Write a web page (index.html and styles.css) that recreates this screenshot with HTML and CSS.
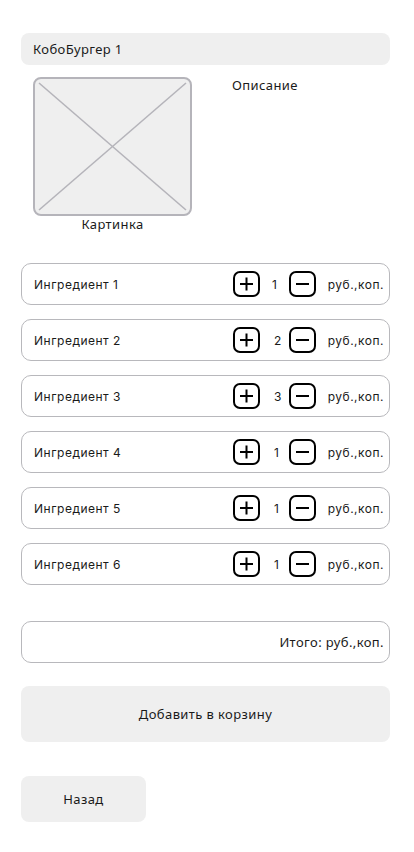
FILE: index.html
```html
<!DOCTYPE html>
<html lang="ru">
<head>
<meta charset="utf-8">
<link rel="stylesheet" href="styles.css">
</head>
<body>
<main class="page">
  <div class="title">КобоБургер 1</div>
  <section class="media">
    <figure class="pic">
      <div class="pic-box">
        <svg width="159" height="139" viewBox="0 0 159 139">
          <line x1="6" y1="6" x2="153" y2="133" stroke="#b5b4ba" stroke-width="1.6"/>
          <line x1="153" y1="6" x2="6" y2="133" stroke="#b5b4ba" stroke-width="1.6"/>
        </svg>
      </div>
      <figcaption class="pic-cap">Картинка</figcaption>
    </figure>
    <div class="desc">Описание</div>
  </section>

  <section class="list">
    <div class="row">
      <span class="name">Ингредиент 1</span>
      <div class="ctrl">
        <svg class="btn" width="27" height="26" viewBox="0 0 27 26"><rect x="1" y="1" width="25" height="24" rx="6" fill="none" stroke="#000" stroke-width="2"/><path d="M13.5 6.5V19.5M7 13H20" stroke="#000" stroke-width="2" fill="none"/></svg>
        <span class="qty">1</span>
        <svg class="btn" width="27" height="26" viewBox="0 0 27 26"><rect x="1" y="1" width="25" height="24" rx="6" fill="none" stroke="#000" stroke-width="2"/><path d="M7 13H20" stroke="#000" stroke-width="2" fill="none"/></svg>
        <span class="price">руб.,коп.</span>
      </div>
    </div>
    <div class="row">
      <span class="name">Ингредиент 2</span>
      <div class="ctrl">
        <svg class="btn" width="27" height="26" viewBox="0 0 27 26"><rect x="1" y="1" width="25" height="24" rx="6" fill="none" stroke="#000" stroke-width="2"/><path d="M13.5 6.5V19.5M7 13H20" stroke="#000" stroke-width="2" fill="none"/></svg>
        <span class="qty qty-r">2</span>
        <svg class="btn" width="27" height="26" viewBox="0 0 27 26"><rect x="1" y="1" width="25" height="24" rx="6" fill="none" stroke="#000" stroke-width="2"/><path d="M7 13H20" stroke="#000" stroke-width="2" fill="none"/></svg>
        <span class="price">руб.,коп.</span>
      </div>
    </div>
    <div class="row">
      <span class="name">Ингредиент 3</span>
      <div class="ctrl">
        <svg class="btn" width="27" height="26" viewBox="0 0 27 26"><rect x="1" y="1" width="25" height="24" rx="6" fill="none" stroke="#000" stroke-width="2"/><path d="M13.5 6.5V19.5M7 13H20" stroke="#000" stroke-width="2" fill="none"/></svg>
        <span class="qty qty-r">3</span>
        <svg class="btn" width="27" height="26" viewBox="0 0 27 26"><rect x="1" y="1" width="25" height="24" rx="6" fill="none" stroke="#000" stroke-width="2"/><path d="M7 13H20" stroke="#000" stroke-width="2" fill="none"/></svg>
        <span class="price">руб.,коп.</span>
      </div>
    </div>
    <div class="row">
      <span class="name">Ингредиент 4</span>
      <div class="ctrl">
        <svg class="btn" width="27" height="26" viewBox="0 0 27 26"><rect x="1" y="1" width="25" height="24" rx="6" fill="none" stroke="#000" stroke-width="2"/><path d="M13.5 6.5V19.5M7 13H20" stroke="#000" stroke-width="2" fill="none"/></svg>
        <span class="qty qty-r">1</span>
        <svg class="btn" width="27" height="26" viewBox="0 0 27 26"><rect x="1" y="1" width="25" height="24" rx="6" fill="none" stroke="#000" stroke-width="2"/><path d="M7 13H20" stroke="#000" stroke-width="2" fill="none"/></svg>
        <span class="price">руб.,коп.</span>
      </div>
    </div>
    <div class="row">
      <span class="name">Ингредиент 5</span>
      <div class="ctrl">
        <svg class="btn" width="27" height="26" viewBox="0 0 27 26"><rect x="1" y="1" width="25" height="24" rx="6" fill="none" stroke="#000" stroke-width="2"/><path d="M13.5 6.5V19.5M7 13H20" stroke="#000" stroke-width="2" fill="none"/></svg>
        <span class="qty qty-r">1</span>
        <svg class="btn" width="27" height="26" viewBox="0 0 27 26"><rect x="1" y="1" width="25" height="24" rx="6" fill="none" stroke="#000" stroke-width="2"/><path d="M7 13H20" stroke="#000" stroke-width="2" fill="none"/></svg>
        <span class="price">руб.,коп.</span>
      </div>
    </div>
    <div class="row">
      <span class="name">Ингредиент 6</span>
      <div class="ctrl">
        <svg class="btn" width="27" height="26" viewBox="0 0 27 26"><rect x="1" y="1" width="25" height="24" rx="6" fill="none" stroke="#000" stroke-width="2"/><path d="M13.5 6.5V19.5M7 13H20" stroke="#000" stroke-width="2" fill="none"/></svg>
        <span class="qty qty-r">1</span>
        <svg class="btn" width="27" height="26" viewBox="0 0 27 26"><rect x="1" y="1" width="25" height="24" rx="6" fill="none" stroke="#000" stroke-width="2"/><path d="M7 13H20" stroke="#000" stroke-width="2" fill="none"/></svg>
        <span class="price">руб.,коп.</span>
      </div>
    </div>
  </section>

  <div class="total">Итого: руб.,коп.</div>
  <button class="add">Добавить в корзину</button>
  <button class="back">Назад</button>
</main>
</body>
</html>
```

FILE: styles.css
```css
* { box-sizing: border-box; }
html, body { margin: 0; padding: 0; background: #fff; }
body {
  font-family: "Noto Sans", "Open Sans", sans-serif;
  color: #1a1a1a;
  font-size: 13px;
  letter-spacing: 0.4px;
}
.page {
  width: 414px;
  padding: 33px 24px 0 21px;
  display: flex;
  flex-direction: column;
}
.title {
  height: 32px;
  background: #efefef;
  border-radius: 8px;
  padding: 0 12px;
  display: flex;
  align-items: center;
}
.media {
  display: flex;
  margin-top: 12px;
  height: 186px;
}
.pic {
  margin: 0 0 0 12px;
  display: flex;
  flex-direction: column;
  align-items: center;
  width: 159px;
  flex: none;
}
.pic-box {
  width: 159px;
  height: 139px;
  border: 2px solid #b5b4ba;
  border-radius: 8px;
  background: #efefef;
  position: relative;
  overflow: hidden;
}
.pic-box svg { position: absolute; left: -2px; top: -2px; }
.pic-cap {
  margin-top: 0;
  line-height: 16px;
}
.desc {
  margin-left: 40px;
  line-height: 16px;
}
.list {
  display: flex;
  flex-direction: column;
  gap: 14px;
}
.row {
  height: 42px;
  border: 1px solid #b8b8bc;
  border-radius: 10px;
  display: flex;
  align-items: center;
  justify-content: space-between;
  padding: 0 5px 0 12px;
  font-family: Inter, "Noto Sans", sans-serif;
  font-size: 12px;
  letter-spacing: 0.5px;
}
.ctrl {
  display: flex;
  align-items: center;
}
.btn { display: block; }
.qty {
  width: 29px;
  text-align: left;
  padding-left: 12px;
}
.qty-r { padding-left: 14px; }
.price {
  width: 68px;
  text-align: right;
}
.total {
  margin-top: 36px;
  height: 42px;
  border: 1px solid #b8b8bc;
  border-radius: 10px;
  display: flex;
  align-items: center;
  justify-content: flex-end;
  padding: 0 5px;
}
button {
  font-family: "Noto Sans", "Open Sans", sans-serif;
  font-size: 13px;
  letter-spacing: 0.4px;
  color: #1a1a1a;
  border: none;
  background: #efefef;
  border-radius: 8px;
  padding: 0;
  cursor: pointer;
}
.add {
  margin-top: 23px;
  height: 56px;
  width: 100%;
}
.back {
  margin-top: 34px;
  width: 125px;
  height: 46px;
}
```
